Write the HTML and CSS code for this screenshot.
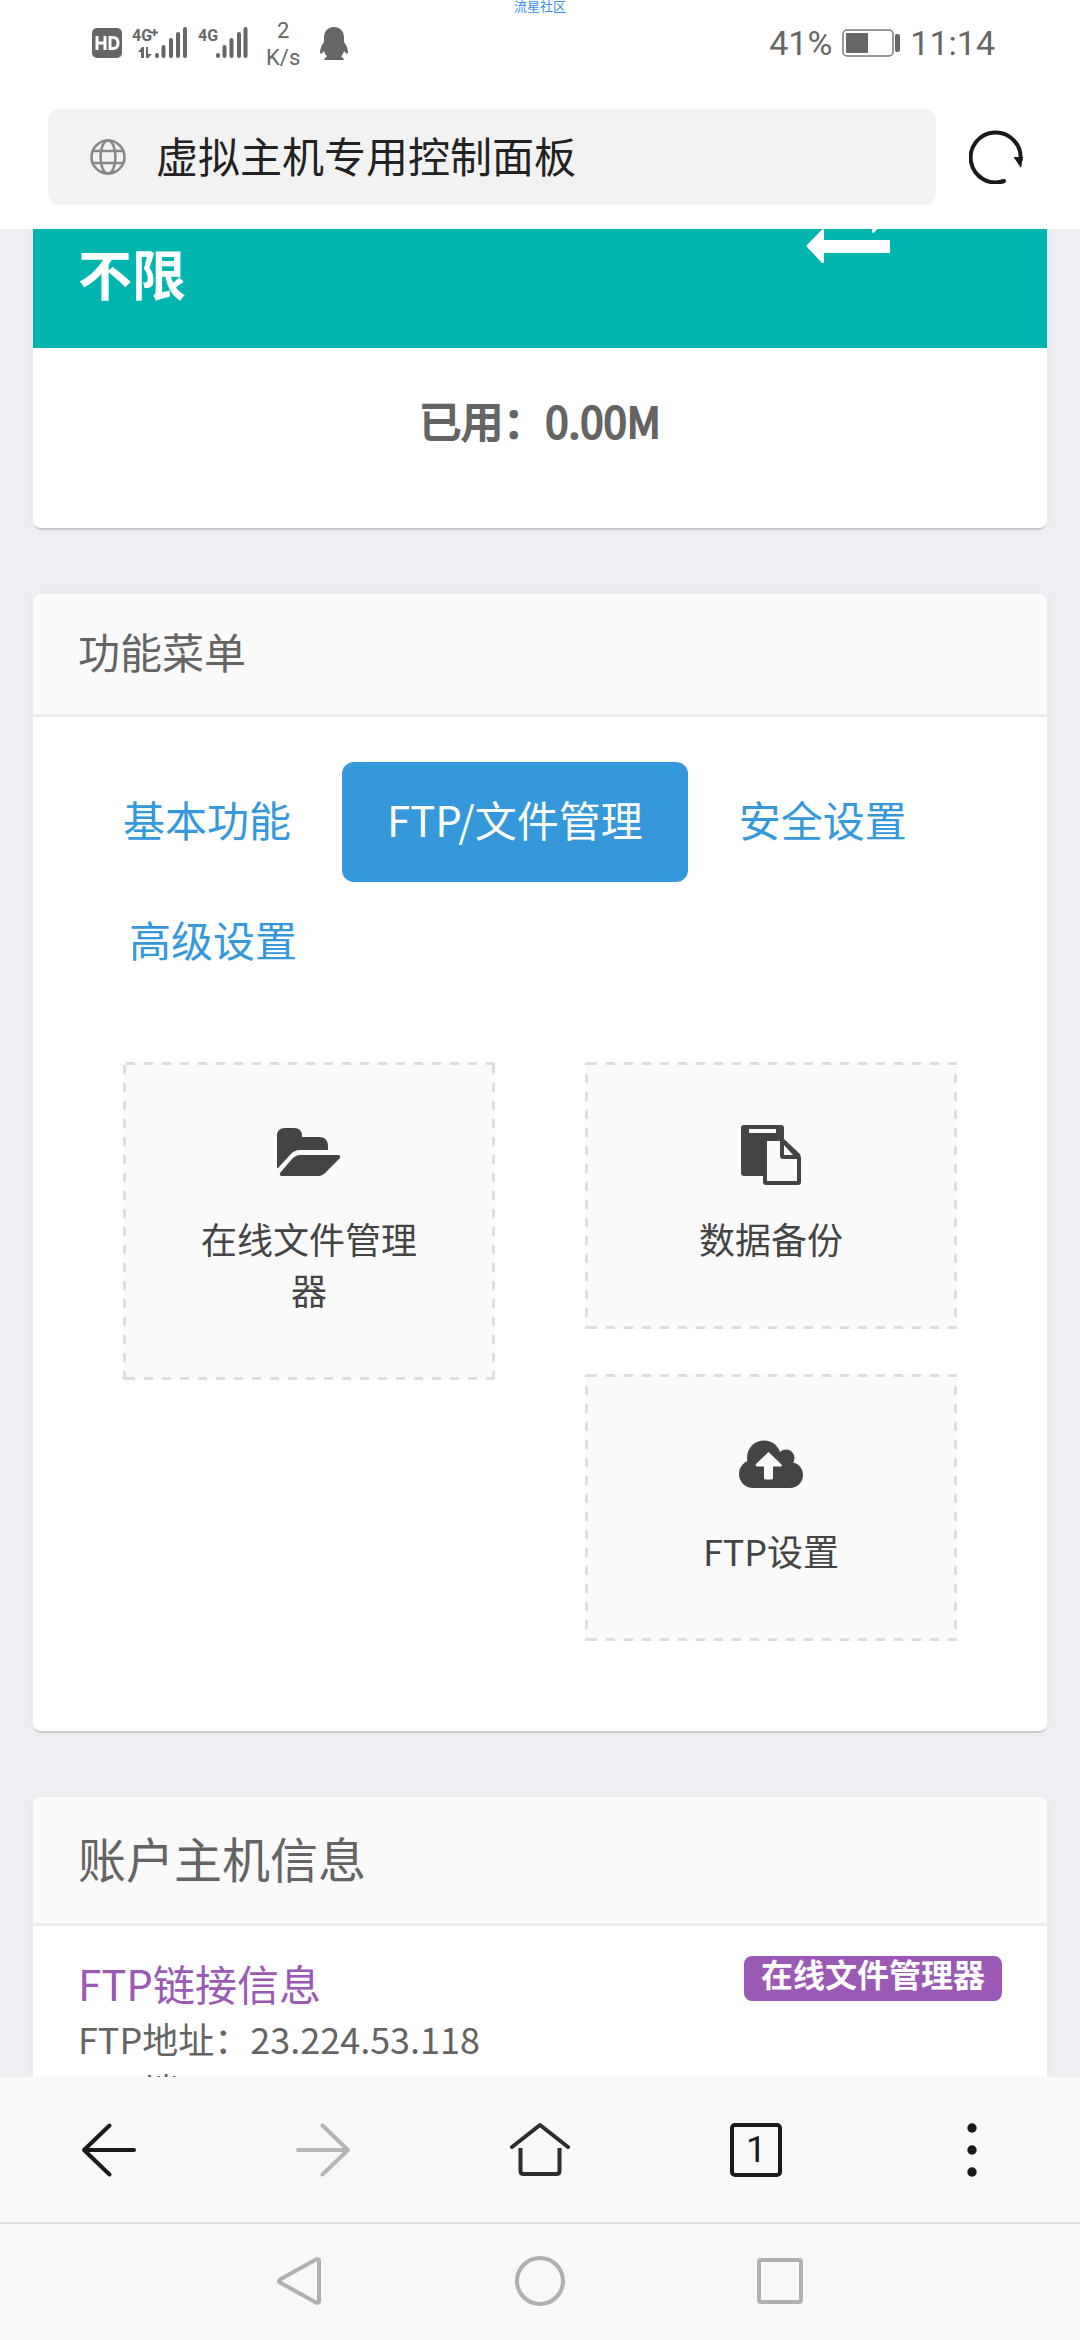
FILE: index.html
```html
<!DOCTYPE html>
<html lang="zh-CN">
<head>
<meta charset="utf-8">
<meta name="viewport" content="width=device-width">
<title>虚拟主机专用控制面板</title>
<link rel="stylesheet" href="styles.css">
</head>
<body>
<div class="watermark">流星社区</div>

<header class="status">
  <div class="status-group">
    <svg class="hd" width="30" height="30" viewBox="0 0 30 30" aria-label="HD">
      <rect width="30" height="30" rx="5" fill="#666"/>
      <path d="M5 8v14M13 8v14M5 15h8M18 9.500v11h3q5 0 5-5.500t-5-5.500z" fill="none" stroke="#fff" stroke-width="3"/>
    </svg>
    <svg class="signal-main" width="56" height="32" viewBox="0 0 56 32">
      <text class="net" x="0" y="14">4G</text>
      <path d="M19 5.500h7M22.500 2v7" stroke="#666" stroke-width="2"/>
      <path d="M6 25l4-5h2v11h-3v-6zM14 20h2v7h4l-4 4h-2z" fill="#666"/>
      <path d="M25 28v1M31.500 20v9M39 13v16M46 7v22M53 2v27" stroke="#666" stroke-width="4" stroke-linecap="round"/>
    </svg>
    <svg class="signal-second" width="50" height="32" viewBox="0 0 50 32">
      <text class="net" x="0" y="14">4G</text>
      <path d="M20 28v1M26.500 20v9M33.500 13v16M41 7v22M47.500 2v27" stroke="#666" stroke-width="4" stroke-linecap="round"/>
    </svg>
    <div class="speed">2<br>K/s</div>
    <svg class="penguin" width="28" height="33" viewBox="0 0 28 33">
      <path d="M14 0C20 0 24 4 24 11V15Q28 20 28 26Q27 28 24 24Q23 28 21 29.500Q24 31 24 33H15H13H4Q4 31 7 29.500Q5 28 4 24Q1 28 0 26Q0 20 4 15V11C4 4 8 0 14 0z" fill="#666"/>
    </svg>
  </div>
  <div class="status-group status-right">
    <span>41%</span>
    <svg width="58" height="28" viewBox="0 0 58 28">
      <rect x="1" y="1" width="50" height="26" rx="4" fill="none" stroke="#777" stroke-width="1.500"/>
      <rect x="4" y="4" width="22" height="20" rx="1" fill="#666"/>
      <rect x="53" y="5" width="5" height="18" rx="2" fill="#666"/>
    </svg>
    <time>11:14</time>
  </div>
</header>

<form class="address">
  <label class="address-box">
    <svg width="36" height="36" viewBox="0 0 36 36" fill="none" stroke="#888" stroke-width="2.600">
      <circle cx="18" cy="18" r="16.500"/>
      <ellipse cx="18" cy="18" rx="7.500" ry="16.500"/>
      <path d="M3 12h30M3 24h30"/>
    </svg>
    <input class="address-input" type="text" value="虚拟主机专用控制面板" aria-label="地址">
  </label>
  <button class="reload" type="button" aria-label="刷新">
    <svg width="54" height="54" viewBox="0 0 54 54">
      <path d="M51.500 30A25 25 0 1 0 35 51" fill="none" stroke="#1a1a1a" stroke-width="4" stroke-linecap="round"/>
      <path d="M44.500 27h9.500l-2 11z" fill="#1a1a1a"/>
    </svg>
  </button>
</form>

<main class="viewport">
  <div class="page">
    <section class="card">
      <div class="traffic">
        <strong class="traffic-value">不限</strong>
        <svg class="traffic-icon" width="84" height="64" viewBox="0 0 84 64" fill="#fff">
          <path d="M1 46L16 30.500q2-1 2 1V41h65q1 0 1 1v11q0 1-1 1H18v9q0 2-2 1L1 48q-1-1 0-2z"/>
          <path d="M83 18L68 33.500q-2 1-2-1V23H1q-1 0-1-1V11q0-1 1-1h65V1q0-2 2-1l15 16q1 1 0 2z"/>
        </svg>
      </div>
      <p class="used">已用：0.00M</p>
    </section>

    <section class="card">
      <h2 class="card-head">功能菜单</h2>
      <div class="menu-body">
        <ul class="tabs">
          <li><a class="tab" href="#basic">基本功能</a></li>
          <li><a class="tab tab-active" href="#ftp">FTP/文件管理</a></li>
          <li><a class="tab" href="#security">安全设置</a></li>
          <li><a class="tab" href="#advanced">高级设置</a></li>
        </ul>
        <div class="tiles">
          <div class="tile-col">
            <a class="tile" href="#files">
              <svg width="64" height="60" viewBox="0 0 64 60" fill="#444">
                <path d="M0 43V11q0-8 8-8h9q8 0 8 8v1h17q9 0 9 9v4H23q-6 0-10 5L1 43z"/>
                <path d="M23 30h39q2 1 1 3L50 46q-4 5-9 5H4q-2-1-1-3l12-14q4-4 8-4z"/>
              </svg>
              <span>在线文件管理器</span>
            </a>
          </div>
          <div class="tile-col">
            <a class="tile tile-short" href="#backup">
              <svg width="64" height="60" viewBox="0 0 64 60" fill="#444">
                <path fill-rule="evenodd" d="M5 0H42q3 0 3 3V14L60 28q2 2 2 5V57q0 3-3 3H27q-3 0-3-3V51H5q-3 0-3-3V3q0-3 3-3zM10 4v4H37V4zM28 16V56H58V34H44q-3 0-3-3V16zM45 20V30H54z"/>
              </svg>
              <span>数据备份</span>
            </a>
            <a class="tile tile-short" href="#ftp-settings">
              <svg width="64" height="60" viewBox="0 0 64 60" fill="#444">
                <circle cx="14" cy="37" r="14"/>
                <circle cx="25" cy="20.500" r="17"/>
                <circle cx="47" cy="21" r="8.500"/>
                <circle cx="51" cy="38" r="13"/>
                <path d="M14 25H50V51H14z"/>
                <path d="M29.500 15L42 27q2 2 0 2.500H34V41q0 1.500-1.500 1.500h-6q-1.500 0-1.500-1.500V29.500H18q-2-.5-1-2.500z" fill="#fafafa"/>
              </svg>
              <span>FTP设置</span>
            </a>
          </div>
        </div>
      </div>
    </section>

    <section class="card">
      <h2 class="card-head card-head-large">账户主机信息</h2>
      <div class="info-body">
        <div class="info-top">
          <h3 class="info-title">FTP链接信息</h3>
          <a class="badge" href="#files">在线文件管理器</a>
        </div>
        <p class="info-line">FTP地址：23.224.53.118</p>
        <p class="info-line">FTP端口：21</p>
      </div>
    </section>
  </div>
</main>

<nav class="toolbar">
  <button class="tool" type="button" aria-label="后退">
    <svg width="56" height="56" viewBox="0 0 56 56" fill="none" stroke="#1a1a1a" stroke-width="4" stroke-linecap="round" stroke-linejoin="round"><path d="M54 28H4M29.500 3.500L4 28L29.500 52.500"/></svg>
  </button>
  <button class="tool" type="button" aria-label="前进">
    <svg width="56" height="56" viewBox="0 0 56 56" fill="none" stroke="#b5b5b5" stroke-width="4" stroke-linecap="round" stroke-linejoin="round"><path d="M2 28H52M26.500 3.500L52 28L26.500 52.500"/></svg>
  </button>
  <button class="tool" type="button" aria-label="主页">
    <svg width="60" height="56" viewBox="0 0 60 56" fill="none" stroke="#2d2d2d" stroke-width="4" stroke-linecap="round" stroke-linejoin="round"><path d="M2 25L30 3L58 25"/><path d="M10.500 26V49q0 3 3 3h33q3 0 3-3V26" stroke-linecap="butt"/></svg>
  </button>
  <button class="tool" type="button" aria-label="标签页"><span class="tab-count">1</span></button>
  <button class="tool" type="button" aria-label="菜单">
    <svg width="12" height="56" viewBox="0 0 12 56" fill="#1a1a1a"><circle cx="6" cy="6" r="4.700"/><circle cx="6" cy="28" r="4.700"/><circle cx="6" cy="50" r="4.700"/></svg>
  </button>
</nav>

<nav class="system">
  <button class="sys" type="button" aria-label="返回">
    <svg width="48" height="52" viewBox="0 0 48 52" fill="none" stroke="#b0b0b0" stroke-width="4" stroke-linejoin="round"><path d="M4 24.500Q2 26 4 27.500L40 47.500Q43 48.500 43 46V6Q43 3.500 40 4.500z"/></svg>
  </button>
  <button class="sys" type="button" aria-label="桌面">
    <svg width="52" height="52" viewBox="0 0 52 52" fill="none" stroke="#b0b0b0" stroke-width="4"><circle cx="26" cy="26" r="23"/></svg>
  </button>
  <button class="sys" type="button" aria-label="最近任务">
    <svg width="46" height="46" viewBox="0 0 46 46" fill="none" stroke="#b0b0b0" stroke-width="4"><rect x="2" y="2" width="42" height="42" rx="2"/></svg>
  </button>
</nav>
</body>
</html>
```

FILE: styles.css
```css
* {
  box-sizing: border-box;
}

body {
  margin: 0;
  height: 100vh;
  display: flex;
  flex-direction: column;
  background: #fff;
  color: #646464;
  font-family: "Noto Sans CJK SC", sans-serif;
  font-size: 36px;
  line-height: 51px;
}

h2, h3, p, ul {
  margin: 0;
  padding: 0;
  font-weight: 400;
}

svg {
  display: block;
  flex: none;
}

a {
  text-decoration: none;
}

button {
  display: flex;
  align-items: center;
  justify-content: center;
  padding: 0;
  border: 0;
  background: none;
}

/* Status bar */

.watermark {
  position: absolute;
  top: 0;
  left: 0;
  right: 0;
  text-align: center;
  font-size: 13px;
  line-height: 12px;
  color: #3a8fe6;
}

.status {
  flex: none;
  height: 86px;
  padding: 0 85px 0 92px;
  display: flex;
  align-items: center;
  justify-content: space-between;
  font-family: Roboto, sans-serif;
  color: #666;
}

.status-group {
  display: flex;
  align-items: center;
  gap: 10px;
}

.status-right {
  font-size: 34px;
}

.net {
  font-family: Roboto, sans-serif;
  font-size: 16px;
  font-weight: 700;
  fill: #666;
}

.speed {
  margin: 0 10px 0 8px;
  padding-top: 2px;
  font-size: 22px;
  line-height: 27px;
  text-align: center;
}

/* Address bar */

.address {
  flex: none;
  display: flex;
  align-items: center;
  gap: 33px;
  padding: 23px 57px 24px 48px;
}

.address-box {
  flex: 1;
  height: 96px;
  padding: 0 42px;
  display: flex;
  align-items: center;
  gap: 30px;
  border-radius: 12px;
  background: #f2f2f2;
}

.address-input {
  flex: 1;
  min-width: 0;
  padding: 0 0 5px;
  border: 0;
  background: none;
  font-family: inherit;
  font-size: 42px;
  line-height: 60px;
  color: #222;
}

/* Web page, scrolled part of the way down */

.viewport {
  flex: 1;
  min-height: 0;
  overflow: hidden;
  background: #edeff3;
}

.page {
  margin-top: -90px;
  padding: 0 33px;
  display: flex;
  flex-direction: column;
  gap: 66px;
}

.card {
  border-radius: 8px;
  background: #fff;
  box-shadow: 0 3px 1px -1px rgba(0, 0, 0, 0.15), 0 0 12px rgba(0, 0, 0, 0.04);
}

.traffic {
  display: grid;
  grid-template-columns: 2fr 1fr;
  padding: 60px 45px 39px;
  height: 209px;
  background: #00b5ad;
  color: #fff;
}

.traffic-value {
  align-self: end;
  font-size: 54px;
  line-height: 72px;
}

.traffic-icon {
  justify-self: center;
}

.used {
  padding: 42px 45px 78px;
  font-size: 42px;
  line-height: 60px;
  text-align: center;
  -webkit-text-stroke: 2px currentColor;
}

.card-head {
  padding: 27px 45px 33px;
  border-bottom: 3px solid #ebebeb;
  border-radius: 8px 8px 0 0;
  background: #fafafa;
  font-size: 42px;
  line-height: 60px;
}

.card-head-large {
  font-size: 48px;
  line-height: 66px;
}

.menu-body {
  padding: 45px;
}

.tabs {
  display: flex;
  flex-wrap: wrap;
  list-style: none;
  margin-bottom: 60px;
}

.tabs li + li {
  margin-left: 6px;
}

.tab {
  display: block;
  padding: 27px 45px 33px;
  border-radius: 12px;
  font-size: 42px;
  line-height: 60px;
  color: #3498db;
}

.tab-active {
  background: #3498db;
  color: #fff;
}

.tiles {
  display: grid;
  grid-template-columns: 1fr 1fr;
}

.tile-col {
  padding: 0 45px;
}

/* Long dashes along each edge, drawn as repeating 18px strips */
.tile {
  --dash-start: 3px;
  display: flex;
  flex-direction: column;
  align-items: center;
  gap: 28px;
  margin-bottom: 45px;
  padding: 63px 63px 65px;
  background:
    linear-gradient(90deg, #ddd 9px, transparent 9px) 3px 0 / 18px 3px repeat-x,
    linear-gradient(90deg, #ddd 9px, transparent 9px) 3px 100% / 18px 3px repeat-x,
    linear-gradient(#ddd 9px, transparent 9px) 0 var(--dash-start) / 3px 18px repeat-y,
    linear-gradient(#ddd 9px, transparent 9px) 100% var(--dash-start) / 3px 18px repeat-y,
    #fafafa;
  color: #444;
  text-align: center;
}

.tile-short {
  --dash-start: 12px;
}

.info-body {
  padding: 27px 45px;
}

.info-top {
  display: flex;
  align-items: flex-start;
  justify-content: space-between;
}

.info-title {
  font-size: 42px;
  line-height: 60px;
  color: #9b59b6;
}

.badge {
  margin-top: 3px;
  padding: 0 17px 11px;
  border-radius: 8px;
  background: #9b59b6;
  font-size: 32px;
  font-weight: 700;
  line-height: 34px;
  color: #fff;
}

/* Browser toolbar and system navigation */

.toolbar {
  flex: none;
  height: 147px;
  display: grid;
  grid-template-columns: repeat(5, 1fr);
  border-bottom: 2px solid #dcdcdc;
  background: #f8f8f8;
}

.tab-count {
  width: 52px;
  height: 54px;
  border: 4px solid #1a1a1a;
  border-radius: 5px;
  font-family: Roboto, sans-serif;
  font-size: 36px;
  line-height: 46px;
  color: #1a1a1a;
}

.system {
  flex: none;
  height: 116px;
  display: grid;
  grid-template-columns: repeat(3, 2fr);
  padding: 0 calc(100% / 6) 2px;
  background: #f8f8f8;
}
```
